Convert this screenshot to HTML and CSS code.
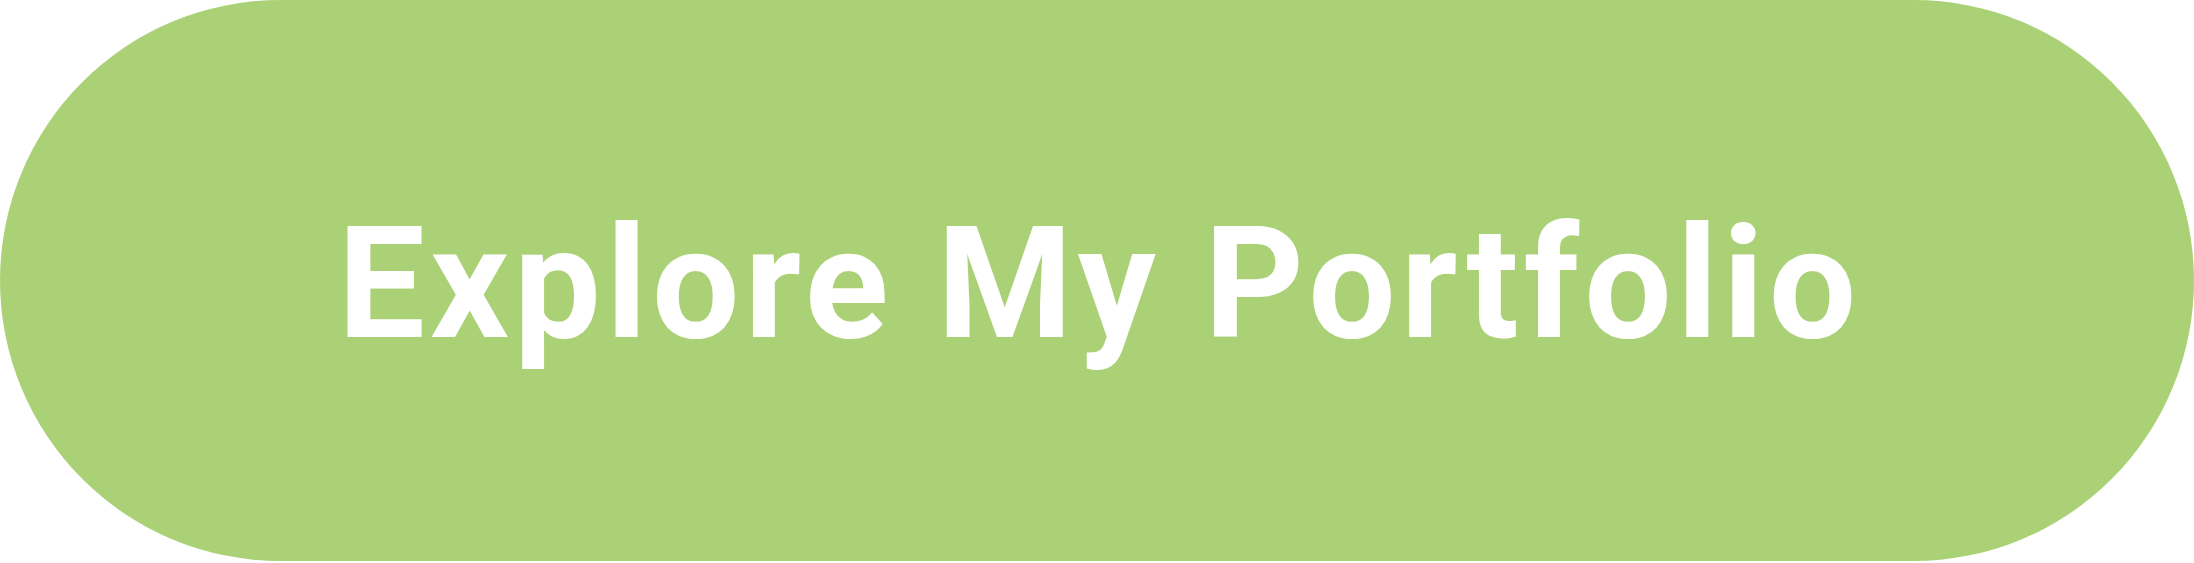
FILE: index.html
```html
<!DOCTYPE html>
<html lang="en">
<head>
    <meta charset="UTF-8">
    <meta name="viewport" content="width=device-width, initial-scale=1.0">
    <title>Explore My Portfolio</title>
    <link rel="stylesheet" href="styles.css">
</head>
<body>
    <a class="cta-btn" href="#portfolio">Explore My Portfolio</a>
</body>
</html>
```
FILE: styles.css
```css
body {
    margin: 0;
    background-color: #ffffff;
}
.cta-btn {
    display: flex;
    justify-content: center;
    align-items: center;
    box-sizing: border-box;
    width: 100%;
    height: 561px;
    padding-top: 6px;
    padding-left: 5px;
    border-radius: 281px;
    background-color: #abd177;
    color: #ffffff;
    font-family: Roboto, "DejaVu Sans", sans-serif;
    font-weight: 700;
    font-size: 155px;
    letter-spacing: 5px;
    text-decoration: none;
}
```
